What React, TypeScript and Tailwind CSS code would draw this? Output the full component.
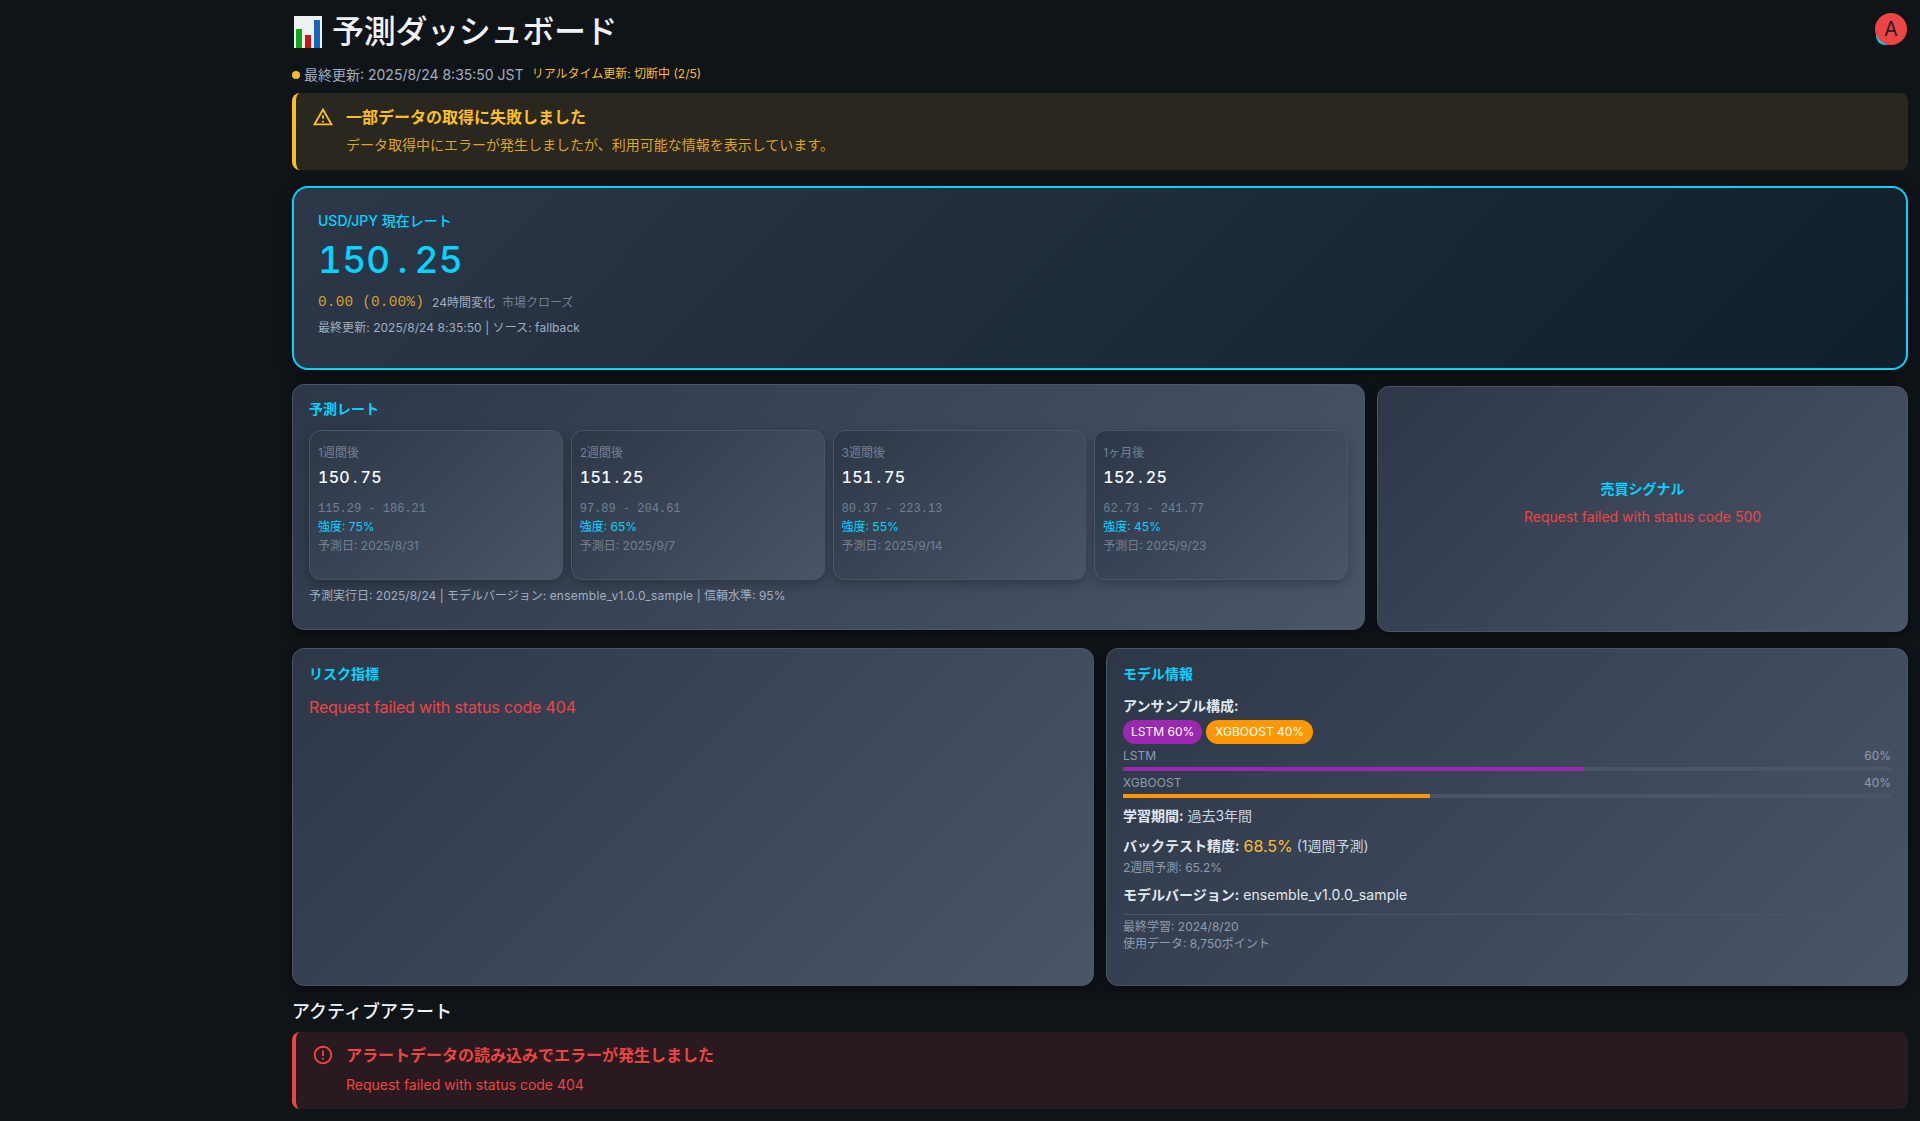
const forecasts = [
  { label: '1週間後', price: '150.75', range: '115.29 - 186.21', strength: '75%', date: '2025/8/31' },
  { label: '2週間後', price: '151.25', range: '97.89 - 204.61', strength: '65%', date: '2025/9/7' },
  { label: '3週間後', price: '151.75', range: '80.37 - 223.13', strength: '55%', date: '2025/9/14' },
  { label: '1ヶ月後', price: '152.25', range: '62.73 - 241.77', strength: '45%', date: '2025/9/23' },
]

const panel =
  'rounded-xl border border-[#4a5568] bg-[linear-gradient(135deg,#2d3748,#4a5568)] shadow-[0_4px_12px_rgba(0,0,0,0.4)]'

function ChartEmoji() {
  return (
    <svg width="30" height="32" viewBox="0 0 30 32" className="mr-[9px] ml-[1px] shrink-0">
      <rect x="1" y="0" width="28" height="32" fill="#eef1f4" />
      <rect x="3" y="13" width="6" height="19" fill="#12a51c" />
      <rect x="12" y="19" width="6" height="13" fill="#c9141a" />
      <rect x="21" y="4" width="6" height="28" fill="#1565c0" />
    </svg>
  )
}

function WarnIcon() {
  return (
    <svg width="22" height="22" viewBox="0 0 24 24" fill="#fbbf24" className="mt-[1px] shrink-0">
      <path d="M12 5.99 19.53 19H4.47L12 5.99M12 2 1 21h22L12 2zm1 14h-2v2h2v-2zm0-6h-2v4h2v-4z" />
    </svg>
  )
}

function ErrorIcon() {
  return (
    <svg width="22" height="22" viewBox="0 0 24 24" fill="#ef4444" className="mt-[1px] shrink-0">
      <path d="M11 15h2v2h-2zm0-8h2v6h-2zm.99-5C6.47 2 2 6.48 2 12s4.47 10 9.99 10C17.52 22 22 17.52 22 12S17.52 2 11.99 2zM12 20c-4.42 0-8-3.58-8-8s3.58-8 8-8 8 3.58 8 8-3.58 8-8 8z" />
    </svg>
  )
}

function ForecastCard({ item }: { item: (typeof forecasts)[number] }) {
  const [whole, decimals] = item.price.split('.')
  return (
    <div className="h-[150px] rounded-xl border border-[#4a5568] bg-[linear-gradient(135deg,#2d3748,#4a5568)] px-[8px] pt-[12px] shadow-[0_4px_12px_rgba(0,0,0,0.25)]">
      <div className="h-[20px] text-xs leading-[20px] text-[#718096]">{item.label}</div>
      <div className="mt-[2px] text-base leading-[24px] font-medium tracking-[0.3px] text-[#f7fafc] tabular-nums">
        {whole}
        <span className="inline-block w-[10.6px] text-center">.</span>
        {decimals}
      </div>
      <div className="mt-[10px] h-[18px] font-['Liberation_Mono',monospace] text-xs leading-[20px] text-[#718096]">{item.range}</div>
      <div className="text-xs leading-[19px] text-[#00d4ff]">強度: {item.strength}</div>
      <div className="text-xs leading-[19px] text-[#718096]">予測日: {item.date}</div>
    </div>
  )
}

function ModelBar({ name, value, color }: { name: string; value: number; color: string }) {
  return (
    <div>
      <div className="flex h-[20px] items-center justify-between text-xs text-[#8f9bb0]">
        <span>{name}</span>
        <span>{value}%</span>
      </div>
      <div className="mt-[1px] h-[4px] bg-[#4a5568]">
        <div className="h-full" style={{ width: `${value}%`, backgroundColor: color }} />
      </div>
    </div>
  )
}

export default function App() {
  return (
    <div className="relative min-h-[1121px] bg-[#0f1419] pr-[12px] pl-[292px] font-['Inter','Noto_Sans_CJK_JP',sans-serif] text-[#f7fafc]">
      {/* avatar */}
      <div className="absolute top-[13px] right-[13px] size-[32px]">
        <div className="absolute top-[14px] left-[1px] size-[18px] rounded-full bg-[#00d4ff]" />
        <div className="absolute inset-0 flex items-center justify-center rounded-full bg-[#ef4444] text-xl text-[#1a202c]">A</div>
      </div>

      {/* header */}
      <div className="flex h-[63px] items-center">
        <ChartEmoji />
        <h1 className="text-[32px] leading-[40px] font-medium tracking-[-0.3px] text-[#f0f2f5]">予測ダッシュボード</h1>
      </div>
      <div className="flex h-[30px] items-start">
        <span className="mt-[8px] mr-[4px] size-[8px] rounded-full bg-[#fbbf24]" />
        <span className="text-sm leading-[24px] text-[#a0aec0]">最終更新: 2025/8/24 8:35:50 JST</span>
        <span className="ml-[8px] text-xs leading-[22px] text-[#fbbf24]">リアルタイム更新: 切断中 (2/5)</span>
      </div>

      {/* warning */}
      <div className="flex h-[77px] rounded-lg border-l-4 border-[#fbbf24] bg-[#2a271e] px-[16px] py-[12px]">
        <WarnIcon />
        <div className="ml-[12px]">
          <div className="text-base leading-[24px] font-semibold text-[#fbbf24]">一部データの取得に失敗しました</div>
          <div className="mt-[6px] text-sm leading-[20px] text-[#fbbf24]/85">データ取得中にエラーが発生しましたが、利用可能な情報を表示しています。</div>
        </div>
      </div>

      {/* current rate */}
      <div className="mt-[16px] h-[184px] rounded-2xl border-2 border-[#00d4ff] bg-[linear-gradient(135deg,#2d3748,#0f1f2b)] px-[24px] pt-[22px] shadow-[0_4px_16px_rgba(0,0,0,0.4)]">
        <div className="text-sm leading-[22px] font-medium text-[#00d4ff]">USD/JPY 現在レート</div>
        <div className="mt-[4px] text-[37px] leading-[48px] font-medium tracking-[0.2px] text-[#00d4ff] tabular-nums">
          150
          <span className="inline-block w-[24px] text-center">.</span>
          25
        </div>
        <div className="mt-[7px] flex h-[24px] items-center">
          <span className="font-['Liberation_Mono',monospace] text-[14.4px] tracking-[0.2px] text-[#d69e2e]">0.00 (0.00%)</span>
          <span className="ml-[8px] text-xs text-[#a0aec0]">24時間変化</span>
          <span className="ml-[7px] text-xs text-[#718096]">市場クローズ</span>
        </div>
        <div className="mt-[3px] text-xs leading-[20px] tracking-[0.05px] text-[#a0aec0]">最終更新: 2025/8/24 8:35:50 | ソース: fallback</div>
      </div>

      {/* forecast and signal */}
      <div className="mt-[16px] grid grid-cols-[1073px_531px] gap-[12px]">
        <div className={`${panel} h-[246px] -translate-y-[2px] px-[16px] pt-[14px]`}>
          <h2 className="text-sm leading-[20px] font-bold text-[#00d4ff]">予測レート</h2>
          <div className="mt-[11px] grid grid-cols-4 gap-[8px]">
            {forecasts.map((item) => (
              <ForecastCard key={item.label} item={item} />
            ))}
          </div>
          <div className="mt-[6px] text-xs leading-[20px] text-[#a0aec0]">
            予測実行日: 2025/8/24 | モデルバージョン: <span className="tracking-[0.25px]">ensemble_v1.0.0_sample</span> | 信頼水準: 95%
          </div>
        </div>
        <div className={`${panel} flex h-[246px] flex-col items-center justify-center`}>
          <h2 className="-mt-[13px] text-sm leading-[20px] font-bold text-[#00d4ff]">売買シグナル</h2>
          <p className="mt-[8px] text-sm leading-[20px] text-[#ef4444]">Request failed with status code 500</p>
        </div>
      </div>

      {/* risk and model */}
      <div className="mt-[16px] grid grid-cols-2 gap-[12px]">
        <div className={`${panel} h-[338px] px-[16px] pt-[15px]`}>
          <h2 className="text-sm leading-[20px] font-bold text-[#00d4ff]">リスク指標</h2>
          <p className="mt-[11px] text-base leading-[24px] tracking-[-0.14px] text-[#ef4444]">Request failed with status code 404</p>
        </div>
        <div className={`${panel} h-[338px] px-[16px] pt-[15px]`}>
          <h2 className="text-sm leading-[20px] font-bold text-[#00d4ff]">モデル情報</h2>
          <div className="mt-[12px] text-sm leading-[20px] font-semibold text-[#e2e8f0]">アンサンブル構成:</div>
          <div className="mt-[4px] flex gap-[4px]">
            <span className="flex h-[24px] items-center rounded-full bg-[#9c27b0] px-[8px] text-xs text-white">LSTM 60%</span>
            <span className="flex h-[24px] items-center rounded-full bg-[#ff9800] px-[9px] text-xs text-white">XGBOOST 40%</span>
          </div>
          <div className="mt-[2px]">
            <ModelBar name="LSTM" value={60} color="#9c27b0" />
          </div>
          <div className="mt-[2px]">
            <ModelBar name="XGBOOST" value={40} color="#ff9800" />
          </div>
          <div className="mt-[8px] text-sm leading-[20px]">
            <b className="font-semibold text-[#e2e8f0]">学習期間:</b> <span className="text-[#cbd5e0]">過去3年間</span>
          </div>
          <div className="mt-[8px] flex h-[24px] items-center text-sm">
            <b className="font-semibold text-[#e2e8f0]">バックテスト精度:</b>
            <span className="ml-[4px] text-base text-[#fbbf24]">68.5%</span>
            <span className="ml-[4px] text-[#cbd5e0]">(1週間予測)</span>
          </div>
          <div className="text-xs leading-[19px] text-[#8f9bb0]">2週間予測: 65.2%</div>
          <div className="mt-[8px] text-sm leading-[20px]">
            <b className="font-semibold text-[#e2e8f0]">モデルバージョン:</b> <span className="tracking-[0.13px] text-[#e2e8f0]">ensemble_v1.0.0_sample</span>
          </div>
          <div className="mt-[9px] border-t border-[#4a5568] pt-[3px] text-xs leading-[17px] text-[#8f9bb0]">
            <div>最終学習: 2024/8/20</div>
            <div>使用データ: 8,750ポイント</div>
          </div>
        </div>
      </div>

      {/* alerts */}
      <h2 className="mt-[12px] text-[18px] leading-[28px] font-medium text-[#f0f2f5]">アクティブアラート</h2>
      <div className="mt-[6px] flex h-[77px] rounded-lg border-l-4 border-[#ef4444] bg-[#281a1e] px-[16px] py-[11px]">
        <ErrorIcon />
        <div className="ml-[12px]">
          <div className="text-base leading-[24px] font-semibold text-[#ef4444]">アラートデータの読み込みでエラーが発生しました</div>
          <div className="mt-[8px] text-sm leading-[20px] text-[#ef4444]">Request failed with status code 404</div>
        </div>
      </div>
    </div>
  )
}
